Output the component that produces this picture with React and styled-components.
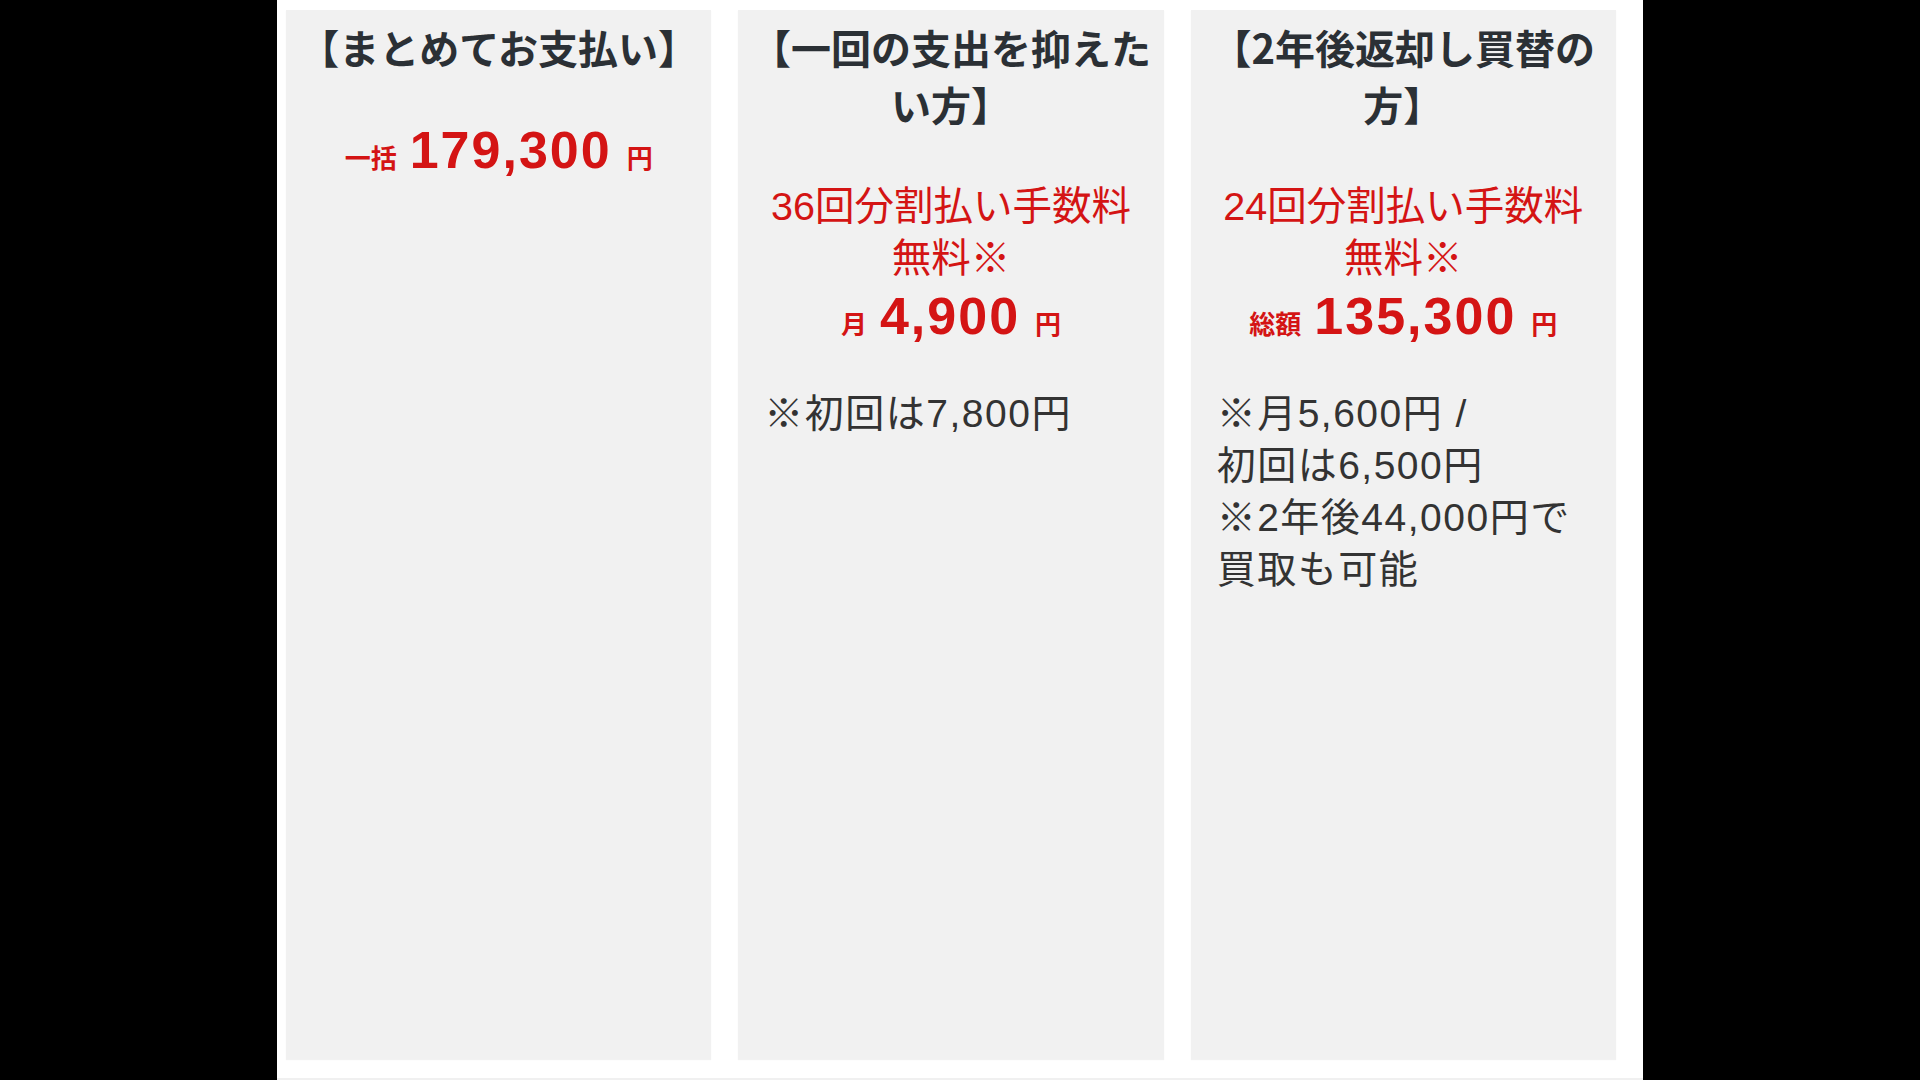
import React from "react";
import styled, { createGlobalStyle } from "styled-components";

const Global = createGlobalStyle`
  html, body { margin: 0; padding: 0; background: #000; }
  body { font-family: "Liberation Sans", "Noto Sans CJK JP", sans-serif; }
`;

const Stage = styled.div`
  width: 100%;
  height: 1080px;
  display: flex;
  justify-content: center;
  background: #000;
`;

const Panel = styled.div`
  width: 1366px;
  height: 1080px;
  box-sizing: border-box;
  background: #fff;
  padding: 10px 27px 19px 9px;
  display: grid;
  grid-template-columns: repeat(3, 1fr);
  column-gap: 27px;
  border-bottom: 2px solid #f0f0f0;
`;

const Column = styled.div`
  background: #f1f1f1;
  box-sizing: border-box;
  padding: 9px 26px;
  box-shadow: 0 1px 1px rgba(0, 0, 0, 0.05);
`;

const Heading = styled.h3`
  margin: 0 -14px 47px;
  font-family: "Noto Sans CJK JP", sans-serif;
  font-size: 40px;
  line-height: 57px;
  font-weight: 700;
  color: #2b3035;
  text-align: center;
`;

const RedNote = styled.p`
  margin: 0;
  font-family: "Liberation Sans", "Noto Sans CJK JP", sans-serif;
  font-size: 39.5px;
  line-height: 52px;
  color: #d41414;
  text-align: center;
  white-space: nowrap;
`;

const PriceLine = styled.div`
  height: 64px;
  line-height: 64px;
  margin-top: ${(p) => (p.$lead ? "-5px" : "0")};
  text-align: center;
  color: #d41414;
  font-weight: 700;
  white-space: nowrap;
`;

const Small = styled.span`
  font-family: "Noto Sans CJK JP", sans-serif;
  font-size: 26px;
  font-weight: 700;
  margin: ${(p) => (p.$side === "left" ? "0 13px 0 0" : "0 0 0 15px")};
`;

const Amount = styled.span`
  font-family: "Liberation Sans", sans-serif;
  font-size: 52px;
  font-weight: 700;
  letter-spacing: 2px;
`;

const Note = styled.p`
  margin: 40px 0 0;
  font-family: "Liberation Sans", "Noto Sans CJK JP", sans-serif;
  font-size: 39px;
  letter-spacing: 1.5px;
  line-height: 52px;
  color: #333;
  text-align: left;
  white-space: nowrap;
`;

const plans = [
  {
    title: "【まとめてお支払い】",
    red: null,
    prefix: "一括",
    amount: "179,300",
    notes: null,
  },
  {
    title: "【一回の支出を抑えたい方】",
    red: ["36回分割払い手数料", "無料※"],
    prefix: "月",
    amount: "4,900",
    notes: ["※初回は7,800円"],
  },
  {
    title: "【2年後返却し買替の方】",
    red: ["24回分割払い手数料", "無料※"],
    prefix: "総額",
    amount: "135,300",
    notes: ["※月5,600円 /", "初回は6,500円", "※2年後44,000円で", "買取も可能"],
  },
];

const Lines = ({ lines }) =>
  lines.map((n, i) => (
    <React.Fragment key={i}>
      {i > 0 && <br />}
      {n}
    </React.Fragment>
  ));

export default function App() {
  return (
    <>
      <Global />
      <Stage>
        <Panel>
          {plans.map((p) => (
            <Column key={p.title}>
              <Heading>{p.title}</Heading>
              {p.red && (
                <RedNote>
                  <Lines lines={p.red} />
                </RedNote>
              )}
              <PriceLine $lead={!p.red}>
                <Small $side="left">{p.prefix}</Small>
                <Amount>{p.amount}</Amount>
                <Small $side="right">円</Small>
              </PriceLine>
              {p.notes && (
                <Note>
                  <Lines lines={p.notes} />
                </Note>
              )}
            </Column>
          ))}
        </Panel>
      </Stage>
    </>
  );
}
